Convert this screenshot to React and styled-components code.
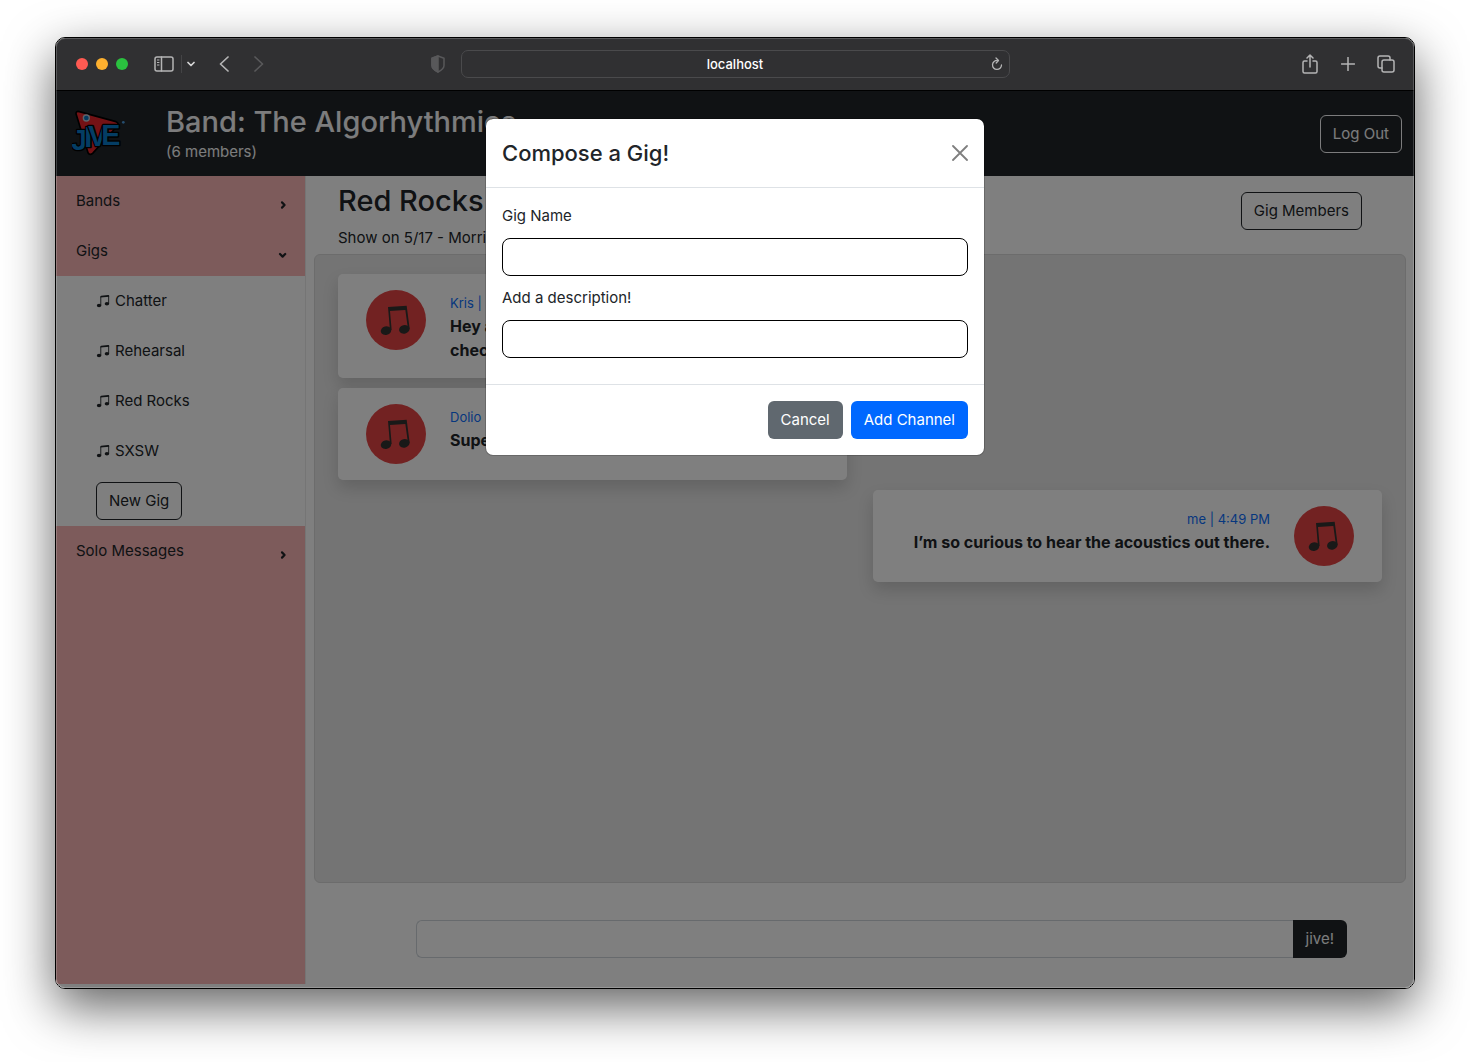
import React from "react";
import styled, { createGlobalStyle, css } from "styled-components";
import { BsMusicNoteBeamed } from "react-icons/bs";

const ink = "#212529";

const GlobalStyle = createGlobalStyle`
  *, *::before, *::after { box-sizing: border-box; }
  body {
    margin: 0;
    background: #fff;
    color: ${ink};
    font-family: Inter, "Liberation Sans", sans-serif;
    font-size: 15px;
    line-height: 24px;
  }
  h1, h2, p, ul { margin: 0; padding: 0; }
  ul { list-style: none; }
  button, input { font: inherit; color: inherit; }
  svg { display: block; flex: none; }
`;

const Desktop = styled.div`
  display: flex;
  min-height: 100vh;
  padding: 37px 55px 73px;
`;

const Window = styled.div`
  position: relative;
  flex: 1;
  display: flex;
  flex-direction: column;
  overflow: hidden;
  border: 1px solid #000;
  border-radius: 10px;
  box-shadow: 0 18px 50px rgba(0, 0, 0, 0.62);
  &::after {
    content: "";
    position: absolute;
    inset: 0;
    border-radius: 9px;
    box-shadow: inset 0 0 0 1px rgba(255, 255, 255, 0.2);
    pointer-events: none;
  }
`;

/* Browser chrome */
const Toolbar = styled.div`
  display: grid;
  grid-template-columns: 1fr minmax(0, 549px) 1fr;
  align-items: center;
  height: 53px;
  background: #303032;
  border-bottom: 1px solid #000;
`;

const ToolGroup = styled.div`
  display: flex;
  align-items: center;
  color: #b4b4b5;
`;

const LeftTools = styled(ToolGroup)`
  padding: 0 13px 0 20px;
`;

const RightTools = styled(ToolGroup)`
  justify-content: flex-end;
  gap: 18px;
  padding-right: 18px;
`;

const Lights = styled.div`
  display: flex;
  gap: 8px;
  margin-right: 26px;
`;

const Light = styled.button`
  width: 12px;
  height: 12px;
  padding: 0;
  border: 0;
  border-radius: 50%;
  background: ${(p) => p.$color};
`;

const ToolButton = styled.button`
  display: flex;
  align-items: center;
  justify-content: center;
  width: ${(p) => p.$width || 20}px;
  height: 24px;
  padding: 0;
  border: 0;
  background: none;
  color: ${(p) => p.$color || "inherit"};
  margin-left: ${(p) => p.$before || 0}px;
`;

const ToolDivider = styled.span`
  width: 1px;
  height: 18px;
  margin: 0 3px 0 7px;
  background: #444446;
`;

const Spacer = styled.span`
  flex: 1;
`;

const AddressBar = styled.div`
  display: grid;
  grid-template-columns: 24px 1fr 24px;
  align-items: center;
  height: 28px;
  border: 1px solid #4a4a4c;
  border-radius: 7px;
  color: #b4b4b5;
`;

const Address = styled.input`
  grid-column: 2;
  min-width: 0;
  padding: 0;
  border: 0;
  outline: 0;
  background: none;
  color: #fff;
  font-size: 13px;
  font-weight: 500;
  line-height: 24px;
  text-align: center;
`;

/* Web page */
const Page = styled.div`
  position: relative;
  flex: 1;
  display: flex;
  flex-direction: column;
  background: #fff;
`;

const Navbar = styled.header`
  display: grid;
  grid-template-columns: 94px 1fr auto;
  align-items: center;
  padding: 13px 12px 12px 16px;
  background: ${ink};
  color: #f8f9fa;
`;

const Heading = styled.h1`
  font-size: 29px;
  font-weight: 500;
  line-height: 36px;
`;

const ButtonBase = styled.button`
  height: 38px;
  padding: 0 12px;
  border: 1px solid transparent;
  border-radius: 6px;
  white-space: nowrap;
`;

const OutlineButton = styled(ButtonBase)`
  background: none;
  border-color: currentColor;
  color: ${(p) => (p.$light ? "#f8f9fa" : ink)};
`;

const Columns = styled.div`
  flex: 1;
  display: grid;
  grid-template-columns: 250px 1fr;
`;

const Sidebar = styled.nav`
  margin-bottom: 4px;
  background: #fab6b6;
  border-right: 1px solid #eaeaea;
`;

const SectionButton = styled.button`
  display: flex;
  align-items: center;
  justify-content: space-between;
  width: 100%;
  height: 50px;
  padding: 0 17px 0 20px;
  border: 0;
  background: none;
  text-align: left;
  svg { margin-top: 7px; }
`;

const GigList = styled.ul`
  background: #fff;
`;

const GigRow = styled.li`
  display: flex;
  align-items: center;
  height: 50px;
  padding-left: 40px;
`;

const GigLink = styled.a`
  display: flex;
  align-items: center;
  gap: 5px;
  color: inherit;
  text-decoration: none;
`;

const Channel = styled.main`
  display: flex;
  flex-direction: column;
  padding-bottom: 30px;
`;

const ChannelHeader = styled.div`
  display: flex;
  justify-content: space-between;
  align-items: flex-start;
  padding: 7px 52px 4px 32px;
  ${OutlineButton} { margin-top: 9px; }
`;

const Subtitle = styled.p`
  margin-top: 7px;
`;

const Thread = styled.section`
  flex: 1;
  display: flex;
  flex-direction: column;
  gap: 10px;
  margin: 0 8px 37px;
  padding: 19px 23px;
  background: #e8e8e8;
  border: 1px solid #d9d9d9;
  border-radius: 6px;
`;

const Bubble = styled.article`
  display: flex;
  align-items: flex-start;
  gap: 24px;
  width: calc(50% - 13px);
  padding: 16px 28px;
  background: #fff;
  border-radius: 5px;
  box-shadow: 0 8px 16px rgba(0, 0, 0, 0.15);
  ${(p) =>
    p.$own &&
    css`
      align-self: flex-end;
      flex-direction: row-reverse;
      text-align: right;
    `}
`;

const Byline = styled.p`
  padding-top: 2px;
  color: #0d6efd;
  font-size: 13px;
  line-height: 22px;
`;

const Message = styled.p`
  font-size: 16px;
  font-weight: 700;
`;

const Composer = styled.form`
  display: flex;
  margin: 0 67px 0 110px;
`;

const ComposerInput = styled.input`
  flex: 1;
  min-width: 0;
  height: 38px;
  padding: 0 12px;
  background: #fff;
  border: 1px solid #ced4da;
  border-right: 0;
  border-radius: 6px 0 0 6px;
`;

const SendButton = styled(ButtonBase)`
  border-radius: 0 6px 6px 0;
  background: ${ink};
  color: #f8f9fa;
`;

/* Dialog */
const Backdrop = styled.div`
  position: absolute;
  inset: 0;
  padding: 27px 16px;
  background: rgba(0, 0, 0, 0.5);
`;

const Dialog = styled.div`
  max-width: 500px;
  margin: 0 auto;
  background: #fff;
  background-clip: padding-box;
  border: 1px solid rgba(0, 0, 0, 0.18);
  border-radius: 8px;
`;

const DialogHeader = styled.div`
  display: flex;
  align-items: center;
  justify-content: space-between;
  padding: 16px;
  border-bottom: 1px solid #dee2e6;
`;

const DialogTitle = styled.h2`
  font-size: 22px;
  font-weight: 500;
  line-height: 36px;
`;

const CloseButton = styled.button`
  padding: 0;
  border: 0;
  background: none;
  color: #7f7f7f;
`;

const Fields = styled.div`
  display: flex;
  flex-direction: column;
  gap: 10px;
  padding: 16px 16px 26px;
`;

const Field = styled.input`
  width: 100%;
  height: 38px;
  padding: 0 12px;
  background: #fff;
  border: 1px solid #000;
  border-radius: 8px;
`;

const DialogFooter = styled.div`
  display: flex;
  justify-content: flex-end;
  gap: 8px;
  padding: 16px;
  border-top: 1px solid #dee2e6;
`;

const SolidButton = styled(ButtonBase)`
  background: ${(p) => (p.$primary ? "#0068ff" : "#60686f")};
  color: #fff;
`;

const Stroke = ({ w, h, width = 1.5, children }) => (
  <svg width={w} height={h} viewBox={`0 0 ${w} ${h}`} fill="none" stroke="currentColor"
    strokeWidth={width} strokeLinecap="round" strokeLinejoin="round" aria-hidden="true">
    {children}
  </svg>
);

const Chevron = ({ open }) => (
  <Stroke w={10} h={10} width={2.2}>
    {open ? <path d="M2 4l2.600 2.600L7.200 4" /> : <path d="M4 2.400l2.600 2.600L4 7.600" />}
  </Stroke>
);

const Avatar = () => (
  <svg width="60" height="60" viewBox="0 0 180 180" aria-hidden="true">
    <circle cx="90" cy="90" r="90" fill="#e54545" />
    <g fill="#333230">
      <path d="M66 51l56-4 9 69-5 2-8-58-46 3 5 56-5 3z" />
      <ellipse cx="60" cy="122" rx="16" ry="13" transform="rotate(-15 60 122)" />
      <ellipse cx="115" cy="118" rx="16" ry="13" transform="rotate(-15 115 118)" />
    </g>
  </svg>
);

const Logo = () => (
  <svg width="54" height="54" viewBox="0 0 162 162" role="img" aria-label="JIVE">
    <g stroke="#000" strokeLinejoin="round">
      <path d="M12 20Q12 11 22 14L132 44Q142 48 136 57L62 139Q54 146 48 137z" fill="#e8242a" strokeWidth="5" />
      <text
        x="-2 37 48 88"
        y="130 121 118 114"
        fill="#087ac8"
        strokeWidth="8"
        paintOrder="stroke"
        fontFamily="'Liberation Sans', sans-serif"
        fontSize="86"
        fontWeight="700"
      >
        JIVE
      </text>
      <circle cx="43" cy="33" r="9" fill="#0878c4" stroke="#b9c6d2" strokeWidth="4" />
    </g>
    <circle cx="154" cy="46" r="4" fill="#4a9be0" />
  </svg>
);

const gigs = ["Chatter", "Rehearsal", "Red Rocks", "SXSW"];

const messages = [
  { who: "Kris", time: "4:47 PM", text: "Hey all, the stage plot for the show is up, so check it out." },
  { who: "Dolio", time: "4:48 PM", text: "Super excited!" },
  { who: "me", time: "4:49 PM", text: "I’m so curious to hear the acoustics out there.", own: true },
];

function BrowserBar() {
  return (
    <Toolbar>
      <LeftTools>
        <Lights>
          <Light $color="#ff5a52" aria-label="Close window" />
          <Light $color="#fdb02f" aria-label="Minimize window" />
          <Light $color="#2ac13f" aria-label="Zoom window" />
        </Lights>
        <ToolButton aria-label="Show sidebar">
          <Stroke w={20} h={16}>
            <rect x="1" y="1" width="18" height="14" rx="2" />
            <path d="M7.500 1v14" />
            <path d="M3.400 4h1.600M3.400 6.500h1.600M3.400 9h1.600" strokeWidth="1" />
          </Stroke>
        </ToolButton>
        <ToolDivider />
        <ToolButton $width={12} $color="#d5d5d6" aria-label="Tab groups">
          <Stroke w={8} h={6} width={1.700}><path d="M1 1.500l3 3 3-3" /></Stroke>
        </ToolButton>
        <ToolButton $before={17} aria-label="Back">
          <Stroke w={10} h={16} width={1.700}><path d="M9 1L1.500 8 9 15" /></Stroke>
        </ToolButton>
        <ToolButton $before={15} $color="#59595b" aria-label="Forward">
          <Stroke w={10} h={16} width={1.700}><path d="M1 1l7.500 7L1 15" /></Stroke>
        </ToolButton>
        <Spacer />
        <ToolButton $color="#58585a" aria-label="Privacy report">
          <Stroke w={14} h={18}>
            <path d="M7 1l6 2.300v7.200c0 3-3 5-6 6.500-3-1.500-6-3.500-6-6.500V3.300z" />
            <path d="M7 1v16c-3-1.500-6-3.500-6-6.500V3.300z" fill="currentColor" />
          </Stroke>
        </ToolButton>
      </LeftTools>
      <AddressBar>
        <Address aria-label="Address" defaultValue="localhost" />
        <ToolButton $width={24} aria-label="Reload">
          <Stroke w={12} h={14} width={1.300}>
            <path d="M6.500 3.500A4.500 4.500 0 1 0 10.500 8M5 1l2.500 2.500L5.200 6" />
          </Stroke>
        </ToolButton>
      </AddressBar>
      <RightTools>
        <ToolButton aria-label="Share">
          <Stroke w={16} h={20}>
            <path d="M5 7H2.500Q1 7 1 8.500v9Q1 19 2.500 19h11q1.500 0 1.500-1.500v-9Q15 7 13.500 7H11M8 13V1M5 4l3-3 3 3" />
          </Stroke>
        </ToolButton>
        <ToolButton aria-label="New tab">
          <Stroke w={14} h={14}><path d="M7 0.500v13M0.500 7h13" /></Stroke>
        </ToolButton>
        <ToolButton aria-label="Tab overview">
          <Stroke w={18} h={18}>
            <rect x="5" y="5" width="12" height="12" rx="2" />
            <path d="M5 13H3q-2 0-2-2V3q0-2 2-2h8q2 0 2 2v2" />
          </Stroke>
        </ToolButton>
      </RightTools>
    </Toolbar>
  );
}

function ComposeDialog() {
  return (
    <Backdrop>
      <Dialog role="dialog" aria-modal="true" aria-labelledby="compose-title">
        <DialogHeader>
          <DialogTitle id="compose-title">Compose a Gig!</DialogTitle>
          <CloseButton aria-label="Close">
            <Stroke w={16} h={16} width={1.800}><path d="M1 1l14 14M15 1L1 15" /></Stroke>
          </CloseButton>
        </DialogHeader>
        <Fields>
          <label htmlFor="gig-name">Gig Name</label>
          <Field id="gig-name" type="text" />
          <label htmlFor="gig-description">Add a description!</label>
          <Field id="gig-description" type="text" />
        </Fields>
        <DialogFooter>
          <SolidButton>Cancel</SolidButton>
          <SolidButton $primary>Add Channel</SolidButton>
        </DialogFooter>
      </Dialog>
    </Backdrop>
  );
}

export default function App() {
  return (
    <Desktop>
      <GlobalStyle />
      <Window>
        <BrowserBar />
        <Page>
          <Navbar>
            <Logo />
            <div>
              <Heading>Band: The Algorhythmics</Heading>
              <p>(6 members)</p>
            </div>
            <OutlineButton $light>Log Out</OutlineButton>
          </Navbar>
          <Columns>
            <Sidebar>
              <SectionButton aria-expanded="false">Bands<Chevron /></SectionButton>
              <SectionButton aria-expanded="true">Gigs<Chevron open /></SectionButton>
              <GigList>
                {gigs.map((gig) => (
                  <GigRow key={gig}>
                    <GigLink href="#">
                      <BsMusicNoteBeamed size={14} />
                      {gig}
                    </GigLink>
                  </GigRow>
                ))}
                <GigRow><OutlineButton>New Gig</OutlineButton></GigRow>
              </GigList>
              <SectionButton aria-expanded="false">Solo Messages<Chevron /></SectionButton>
            </Sidebar>
            <Channel>
              <ChannelHeader>
                <div>
                  <Heading as="h2">Red Rocks</Heading>
                  <Subtitle>Show on 5/17 - Morrison, CO</Subtitle>
                </div>
                <OutlineButton>Gig Members</OutlineButton>
              </ChannelHeader>
              <Thread>
                {messages.map((m) => (
                  <Bubble key={m.time} $own={m.own}>
                    <Avatar />
                    <div>
                      <Byline>{m.who} | {m.time}</Byline>
                      <Message>{m.text}</Message>
                    </div>
                  </Bubble>
                ))}
              </Thread>
              <Composer>
                <ComposerInput aria-label="Message" />
                <SendButton type="button">jive!</SendButton>
              </Composer>
            </Channel>
          </Columns>
          <ComposeDialog />
        </Page>
      </Window>
    </Desktop>
  );
}
